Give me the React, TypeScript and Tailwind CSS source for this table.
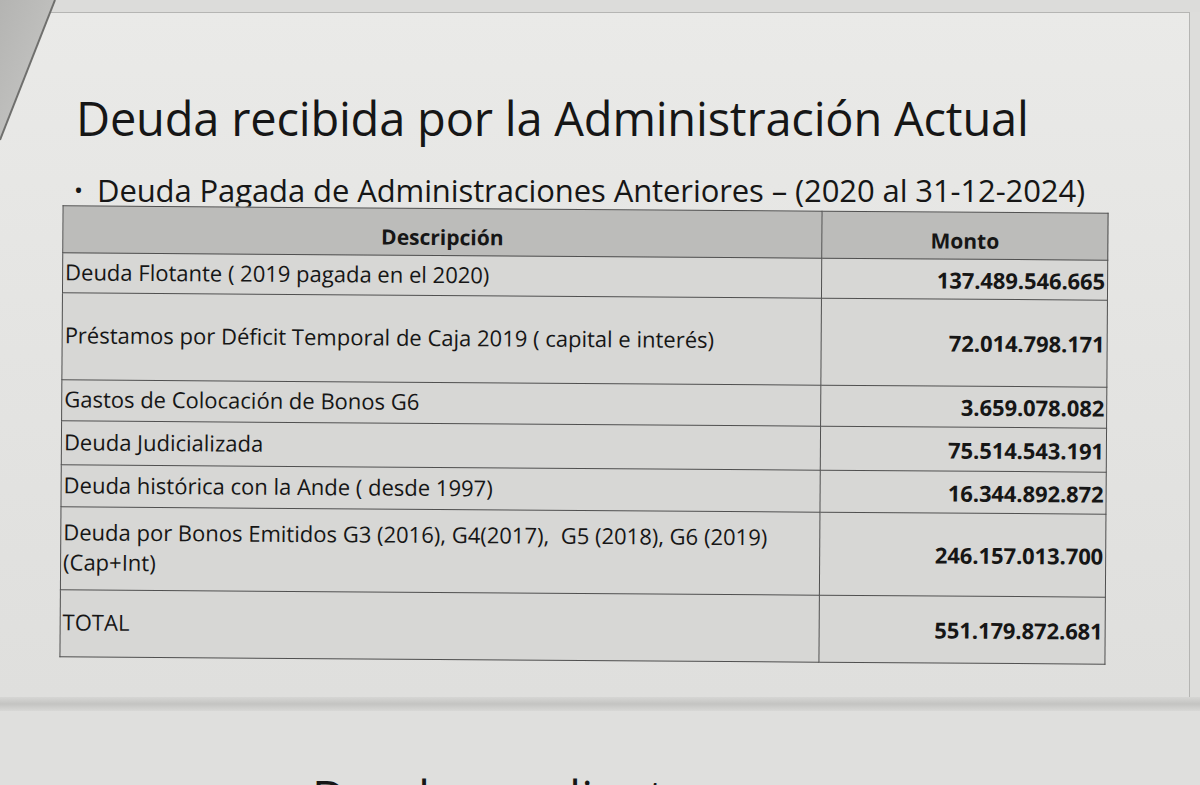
const rows = [
  { desc: ["Deuda Flotante ( 2019 pagada en el 2020)"], monto: "137.489.546.665", h: "h-[40px]" },
  { desc: ["Préstamos por Déficit Temporal de Caja 2019 ( capital e interés)"], monto: "72.014.798.171", h: "h-[87px]" },
  { desc: ["Gastos de Colocación de Bonos G6"], monto: "3.659.078.082", h: "h-[41px]" },
  { desc: ["Deuda Judicializada"], monto: "75.514.543.191", h: "h-[44px]" },
  { desc: ["Deuda histórica con la Ande ( desde 1997)"], monto: "16.344.892.872", h: "h-[42px]" },
  {
    desc: ["Deuda por Bonos Emitidos G3 (2016), G4(2017),\u00a0 G5 (2018), G6 (2019)", "(Cap+Int)"],
    monto: "246.157.013.700",
    h: "h-[83px]",
  },
  { desc: ["TOTAL"], monto: "551.179.872.681", h: "h-[67px]" },
];

export default function App() {
  return (
    <div
      className="relative h-[785px] w-[1200px] overflow-hidden bg-[#dddddb] text-[#161616]"
      style={{ fontFamily: '"Open Sans", "Noto Sans", sans-serif' }}
    >
      {/* top strip above the sheet */}
      <div className="h-[12px] bg-[#dcdcda]" />

      {/* printed slide */}
      <div className="h-[685px] w-[1190px] border-t border-r border-[#b5b5b3] bg-gradient-to-b from-[#eaeae8] via-[#e4e4e2] to-[#dfdfdd]">
        <h1 className="pl-[76px] pt-[79px] text-[47px] font-normal leading-[52px] tracking-[-0.2px]">
          Deuda recibida por la Administración Actual
        </h1>
        <div className="mt-[27px] flex items-center pl-[74px] text-[31px] leading-[38px] tracking-[-0.1px]">
          <span className="w-[23px] text-[24px]">•</span>
          <span>Deuda Pagada de Administraciones Anteriores – (2020 al 31-12-2024)</span>
        </div>

        <table className="ml-[61px] w-[1046px] rotate-[0.4deg] border-collapse border border-[#505050] bg-[#d7d7d5] text-[22px]">
          <thead>
            <tr className="h-[47px] bg-[#bcbcba]">
              <th className="w-[759px] border border-[#505050] px-1 pb-[6px] align-bottom text-[21px] font-bold leading-6">
                Descripción
              </th>
              <th className="border border-[#505050] px-1 pb-[6px] align-bottom text-[21px] font-bold leading-6">
                Monto
              </th>
            </tr>
          </thead>
          <tbody>
            {rows.map((r) => (
              <tr key={r.monto} className={r.h}>
                <td className="whitespace-nowrap border border-[#505050] px-[2px] pb-[4px] align-middle leading-[30px]">
                  {r.desc.length > 1 ? (
                    <>
                      {r.desc[0]}
                      <br />
                      {r.desc[1]}
                    </>
                  ) : (
                    r.desc[0]
                  )}
                </td>
                <td className="border border-[#505050] px-[2px] text-right align-middle text-[22px] font-bold leading-6 tracking-[-0.1px]">
                  {r.monto}
                </td>
              </tr>
            ))}
          </tbody>
        </table>
      </div>

      {/* fold between sheets */}
      <div className="h-[14px] bg-gradient-to-b from-[#d6d6d4] via-[#c4c4c2] to-[#d8d8d6]" />

      {/* next slide, mostly cut off */}
      <div className="h-[75px] bg-[#dfdfdd]">
        <div className="pl-[312px] pt-[60px] text-[47px] leading-[52px]">Deuda pendiente</div>
      </div>

      {/* corner of another sheet lying on top */}
      <svg className="absolute left-0 top-0" width="70" height="150" viewBox="0 0 70 150">
        <defs>
          <linearGradient id="corner" x1="0" y1="0" x2="1" y2="1">
            <stop offset="0" stopColor="#b4b4b2" />
            <stop offset="1" stopColor="#c9c9c7" />
          </linearGradient>
        </defs>
        <polygon points="0,0 55,0 0,140" fill="url(#corner)" />
        <line x1="55" y1="0" x2="0" y2="140" stroke="#6f6f6d" strokeWidth="2" />
      </svg>
    </div>
  );
}
